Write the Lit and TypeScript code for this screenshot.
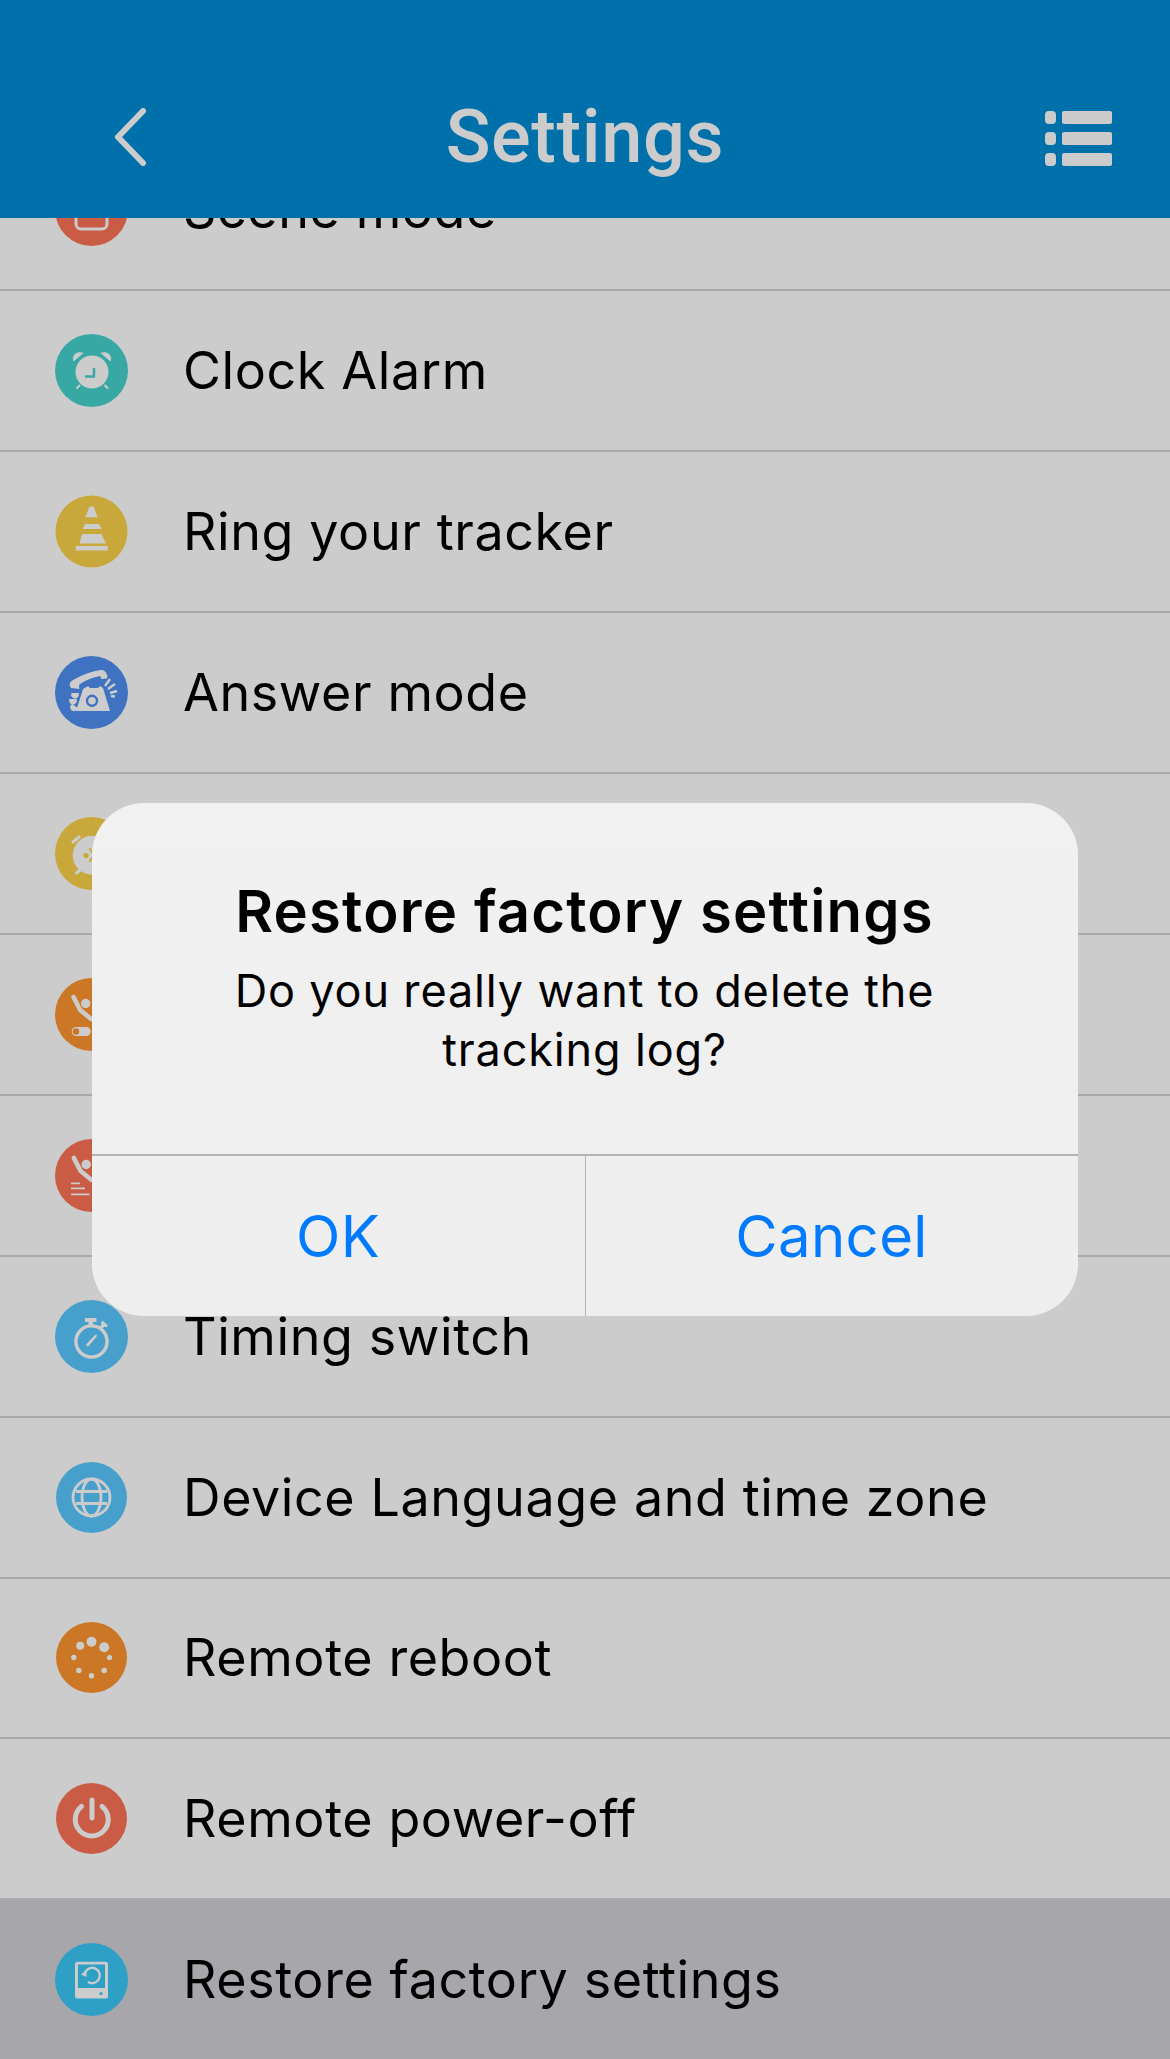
import { LitElement, css, html, svg } from 'lit';
import { customElement } from 'lit/decorators.js';

const W = '#fff';

// glyphs are drawn on a 73x73 box, with the coloured disc behind them
const glyphs: Record<string, unknown> = {
  scene: svg`<rect x="21" y="16" width="31" height="40" rx="5" fill="none" stroke=${W} stroke-width="3"/>`,
  clock: svg`
    <circle cx="37" cy="38" r="16.5" fill=${W}/>
    <path d="M39 34v8.500h-9" fill="none" stroke="currentColor" stroke-width="2.400"/>
    <path d="M18.500 27.500c-2.500-6 3.500-11.500 10-8.500z" fill=${W}/>
    <path d="M55.500 27.500c2.500-6-3.500-11.500-10-8.500z" fill=${W}/>
    <path d="M25 51l-3.500 3.500M49.500 51l3.500 3.500" stroke=${W} stroke-width="2"/>`,
  cone: svg`
    <path d="M34.500 11.500h4l4.300 10.700h-12.600zM30 29h14l2.800 5h-19zM27 39h19.500l4.500 9.500h-26.500zM20.800 51h32v4.500h-32z" fill=${W}/>`,
  phone: svg`
    <path d="M16 32c-2.500-4-1-6.500 3-8.500 9-5 18-8.500 27-9.500 3-.4 5.500 2 6.500 6l-.5 2.500-5.500.5-1.500-3c-7 1.500-14 4-20 8-1.500 1-1 3-.5 5z" fill=${W}/>
    <path d="M28 33l5-3 2 2h8l2-2 3 2 7 23H21z" fill=${W}/>
    <circle cx="37" cy="44.800" r="5" fill="none" stroke="currentColor" stroke-width="2.400"/>
    <path d="M17.500 37a3 3 0 1 0 5 0M15.500 43a3 3 0 1 0 5 0M18 48.500a3 3 0 1 0 4 3" fill=${W} stroke=${W} stroke-width="1.600"/>
    <path d="M50 30l5-7M53 33l7-5M55 37l7-2M56 40l4 .5" stroke=${W} stroke-width="2.400"/>`,
  alarm: svg`
    <circle cx="37.200" cy="38.200" r="19.500" fill=${W}/>
    <path d="M18 25l6-5M21.500 56l3.500-3" stroke=${W} stroke-width="3.200" stroke-linecap="round"/>
    <circle cx="31" cy="38.500" r="2.600" fill="currentColor"/>
    <path d="M35 32l4 6-4 6" fill="none" stroke="currentColor" stroke-width="2.200" stroke-linecap="round"/>`,
  sleepToggle: svg`
    <path d="M18.500 19l6.700 13 11 9" fill="none" stroke=${W} stroke-width="4.500" stroke-linecap="round"/>
    <circle cx="30.700" cy="25.500" r="4.700" fill=${W}/>
    <rect x="16.700" y="49" width="19" height="9" rx="4.500" fill=${W}/>
    <circle cx="21" cy="53.500" r="3.200" fill="currentColor"/>`,
  sleepList: svg`
    <path d="M18.800 18.900l6.700 13 11 9" fill="none" stroke=${W} stroke-width="4.500" stroke-linecap="round"/>
    <circle cx="31.200" cy="25.500" r="4.700" fill=${W}/>
    <path d="M16 44.300h9M16 49.300h14M16 55.300h18.500" stroke=${W} stroke-width="1.700"/>`,
  timer: svg`
    <circle cx="36.500" cy="41.500" r="15.600" fill="none" stroke=${W} stroke-width="3.400"/>
    <path d="M30 18h11.500v4h-3.500v4h-4.500v-4H30z" fill=${W}/>
    <path d="M47.500 20.500l5.500 5-2 2-1.500-1-2.500 2.500-2.500-2.500 2.200-2.300-1-1.200z" fill=${W}/>
    <path d="M31 44.500l9-9.500 2-.5-.5 2.200-8 9.500a1.800 1.800 0 0 1-2.500-1.700z" fill=${W}/>`,
  globe: svg`
    <g fill="none" stroke=${W} stroke-width="2.800">
      <circle cx="36.500" cy="36.500" r="18.500"/>
      <ellipse cx="36.500" cy="36.500" rx="9.500" ry="18.500"/>
      <path d="M21 30.500h31M21 42.500h31" />
    </g>`,
  reboot: svg`
    <g fill=${W}>
      <circle cx="36.500" cy="20.800" r="5"/><circle cx="49.200" cy="26.200" r="5"/>
      <circle cx="25.200" cy="24.800" r="4"/><circle cx="54.500" cy="36.500" r="2.600"/>
      <circle cx="49.200" cy="49.500" r="2.800"/><circle cx="36.500" cy="54.800" r="2.700"/>
      <circle cx="23.800" cy="49.500" r="2.800"/><circle cx="18.800" cy="36.500" r="2.700"/>
    </g>`,
  power: svg`
    <path d="M26.500 24.500a16.500 16.500 0 1 0 20.500 0" fill="none" stroke=${W} stroke-width="5" stroke-linecap="round"/>
    <path d="M37 18v18" stroke=${W} stroke-width="5" stroke-linecap="round"/>`,
  restore: svg`
    <path d="M22.500 18.800h28a2.500 2.500 0 0 1 2.500 2.500v31.700a2.500 2.500 0 0 1-2.500 2.500h-28a2.500 2.500 0 0 1-2.500-2.500V21.300a2.500 2.500 0 0 1 2.500-2.500zM23 21.500v23.500h27V21.500z" fill=${W} fill-rule="evenodd"/>
    <circle cx="46" cy="50.500" r="1.500" fill="currentColor"/>
    <path d="M30 29.500a7.700 7.700 0 1 1 3 9.500" fill="none" stroke=${W} stroke-width="2.400"/>
    <path d="M26 31.500l5.500-4.500v7z" fill=${W}/>`,
};

type Row = { label: string; icon: string; color: string; r?: number; active?: boolean };

const ROWS: Row[] = [
  { label: 'Scene mode', icon: 'scene', color: '#fd7458' },
  { label: 'Clock Alarm', icon: 'clock', color: '#46d3ce' },
  { label: 'Ring your tracker', icon: 'cone', color: '#fbd249', r: 36 },
  { label: 'Answer mode', icon: 'phone', color: '#4f8ff0' },
  // the labels of these three rows are hidden under the dialog
  { label: '', icon: 'alarm', color: '#fbd249' },
  { label: '', icon: 'sleepToggle', color: '#ff952f' },
  { label: '', icon: 'sleepList', color: '#fd7458' },
  { label: 'Timing switch', icon: 'timer', color: '#59c8ff' },
  { label: 'Device Language and time zone', icon: 'globe', color: '#59c8ff', r: 35.5 },
  { label: 'Remote reboot', icon: 'reboot', color: '#ff952f', r: 35.5 },
  { label: 'Remote power-off', icon: 'power', color: '#fd7458', r: 35.5 },
  { label: 'Restore factory settings', icon: 'restore', color: '#3ac8f8', active: true },
];

@customElement('app-root')
export class AppRoot extends LitElement {
  static styles = css`
    :host {
      display: block;
      position: relative;
      height: 2059px;
      overflow: hidden;
      background: #fff;
      font-family: Inter, 'Liberation Sans', sans-serif;
      color: #000;
    }
    .nav {
      position: relative;
      z-index: 1;
      height: 218px;
      box-sizing: border-box;
      background: #008dd5;
      color: #fff;
      display: grid;
      grid-template-columns: 1fr auto 1fr;
      align-items: start;
      padding: 96px 58px 0;
    }
    .nav svg {
      display: block;
    }
    .nav .menu {
      justify-self: end;
      margin-top: 15px;
    }
    .nav .back {
      margin: 12px 0 0 56px;
    }
    .title {
      font-family: Roboto, sans-serif;
      font-weight: 500;
      font-size: 74px;
      letter-spacing: 0.6px;
      line-height: 82px;
    }
    .list {
      margin-top: -87.5px;
    }
    .row {
      height: 160.9px;
      box-sizing: border-box;
      display: flex;
      align-items: center;
      gap: 55px;
      padding-left: 55px;
      border-bottom: 2px solid #d4d4d4;
      font-size: 52px;
      letter-spacing: 0.6px;
    }
    .row.active {
      background: #d1d0d6;
      border-bottom-color: transparent;
    }
    .row svg {
      flex: none;
      display: block;
    }
    .scrim {
      position: absolute;
      inset: 0;
      z-index: 2;
      background: rgba(0, 0, 0, 0.2);
      display: flex;
      justify-content: center;
      padding-top: 803px;
      box-sizing: border-box;
    }
    .dialog {
      width: 986px;
      height: 513px;
      background: linear-gradient(#f2f1f1, #efeeee);
      border-radius: 52px;
      display: flex;
      flex-direction: column;
      margin-left: -1px;
      overflow: hidden;
    }
    .body {
      height: 353px;
      box-sizing: border-box;
      padding: 74px 60px 0;
      text-align: center;
      border-bottom: 2px solid #b4b4b4;
    }
    h2 {
      margin: 0;
      font-size: 58px;
      font-weight: 600;
      letter-spacing: 1.2px;
      line-height: 68px;
    }
    p {
      margin: 16px 0 0;
      font-size: 45px;
      letter-spacing: 0.85px;
      line-height: 59px;
    }
    .actions {
      flex: 1;
      display: grid;
      grid-template-columns: 1fr 1fr;
    }
    .actions div {
      display: flex;
      align-items: center;
      justify-content: center;
      color: #007aff;
      font-size: 58px;
      letter-spacing: 0.4px;
    }
    .actions div + div {
      border-left: 1.5px solid #b4b4b4;
    }
  `;

  private _icon(row: Row) {
    return html`<svg width="73" height="73" viewBox="0 0 73 73" style="color:${row.color}">
      <circle cx="36.500" cy="36.500" r=${row.r ?? 36.500} fill="currentColor"></circle>
      ${glyphs[row.icon]}
    </svg>`;
  }

  render() {
    return html`
      <header class="nav">
        <svg class="back" width="33" height="58" viewBox="0 0 33 58">
          <path d="M29 3L4 29l25 26" fill="none" stroke="#fff" stroke-width="6" stroke-linecap="round" stroke-linejoin="round"></path>
        </svg>
        <div class="title">Settings</div>
        <svg class="menu" width="67" height="55" viewBox="0 0 67 55" fill="#fff">
          <rect x="0" y="0" width="11" height="13" rx="4"></rect><rect x="17" y="0" width="50" height="13" rx="2"></rect>
          <rect x="0" y="21" width="11" height="13" rx="4"></rect><rect x="17" y="21" width="50" height="13" rx="2"></rect>
          <rect x="0" y="42" width="11" height="13" rx="4"></rect><rect x="17" y="42" width="50" height="13" rx="2"></rect>
        </svg>
      </header>
      <div class="list">
        ${ROWS.map(
          (r) => html`<div class="row ${r.active ? 'active' : ''}">${this._icon(r)}<span>${r.label}</span></div>`
        )}
      </div>
      <div class="scrim">
        <div class="dialog">
          <div class="body">
            <h2>Restore factory settings</h2>
            <p>Do you really want to delete the tracking log?</p>
          </div>
          <div class="actions">
            <div>OK</div>
            <div>Cancel</div>
          </div>
        </div>
      </div>
    `;
  }
}
